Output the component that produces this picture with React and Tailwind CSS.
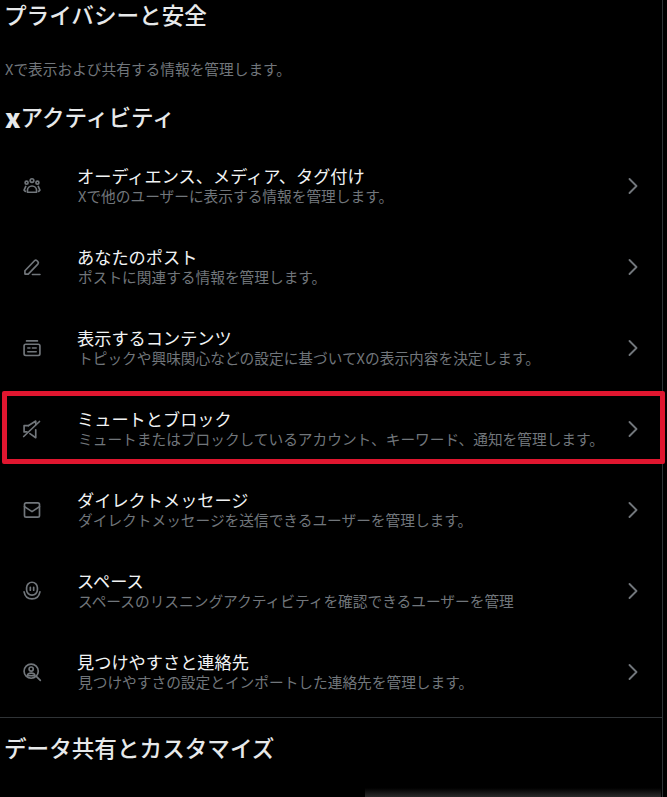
import React from 'react';
import { ChevronRight } from 'lucide-react';

const font = { fontFamily: '"Noto Sans CJK JP", "Noto Sans", sans-serif' };

// icons drawn to match the settings list
const icons = {
  audience: (
    <>
      <circle cx="12" cy="5.500" r="2.200" />
      <circle cx="5.500" cy="8" r="1.800" />
      <circle cx="18.500" cy="8" r="1.800" />
      <path d="M6.500 19.500v-2a5.500 5.500 0 0 1 11 0v2z" />
      <path d="M4.500 12.500 2.500 17l1.500 1.500M19.500 12.500l2 4.500-1.500 1.500" />
    </>
  ),
  pencil: (
    <>
      <path d="M3.500 16.500 15 4.500a2.200 2.200 0 0 1 3 0l1 1a2.200 2.200 0 0 1 0 3L7.500 20.500h-4z" />
      <path d="M12.500 21h9" />
    </>
  ),
  content: (
    <>
      <path d="M5.500 3.500h13" />
      <rect x="2.500" y="7.500" width="19" height="13.500" rx="2" />
      <path d="M7 12h2.500M12.500 12H17M7 16.500h10" />
    </>
  ),
  mute: (
    <>
      <path d="M7.500 8H2.500v7.500h3.500" />
      <path d="m7.500 8 9-5.500V7" />
      <path d="M16.500 13v9.500l-7-5" />
      <path d="M2 21 21 3" />
    </>
  ),
  mail: (
    <>
      <rect x="3" y="3.500" width="18" height="17" rx="2" />
      <path d="m3 8 9 6 9-6" />
    </>
  ),
  spaces: (
    <>
      <rect x="5.500" y="1.500" width="13" height="15.500" rx="6.500" />
      <path d="M10 7.500v3.500M14 7.500v3.500" />
      <path d="M2.500 13c1 5.500 4.800 8.500 9.500 8.500s8.500-3 9.500-8.500" />
    </>
  ),
  discover: (
    <>
      <circle cx="11" cy="11" r="8.500" />
      <circle cx="11" cy="8.500" r="2.500" />
      <path d="M6.500 16.500c0-2.200 1.800-3.200 4.500-3.200s4.500 1 4.500 3.200z" />
      <path d="m17.500 17.500 4.500 4.500" />
    </>
  ),
};

const rows = [
  { icon: 'audience', title: 'オーディエンス、メディア、タグ付け', desc: 'Xで他のユーザーに表示する情報を管理します。' },
  { icon: 'pencil', title: 'あなたのポスト', desc: 'ポストに関連する情報を管理します。' },
  { icon: 'content', title: '表示するコンテンツ', desc: 'トピックや興味関心などの設定に基づいてXの表示内容を決定します。' },
  { icon: 'mute', title: 'ミュートとブロック', desc: 'ミュートまたはブロックしているアカウント、キーワード、通知を管理します。', marked: true },
  { icon: 'mail', title: 'ダイレクトメッセージ', desc: 'ダイレクトメッセージを送信できるユーザーを管理します。' },
  { icon: 'spaces', title: 'スペース', desc: 'スペースのリスニングアクティビティを確認できるユーザーを管理' },
  { icon: 'discover', title: '見つけやすさと連絡先', desc: '見つけやすさの設定とインポートした連絡先を管理します。' },
];

function Row({ icon, title, desc, marked }) {
  return (
    <div className="relative flex h-[81px] items-center pl-[22px] pr-[15px]">
      <svg
        viewBox="0 0 24 24"
        className="h-[20px] w-[20px] shrink-0 text-[#71767b]"
        fill="none"
        stroke="currentColor"
        strokeWidth="2"
        strokeLinecap="round"
        strokeLinejoin="round"
      >
        {icons[icon]}
      </svg>
      <div className="ml-[36px] min-w-0 flex-1">
        <div className="ml-[-1px] h-[20px] text-[17.200px] leading-[20px] whitespace-nowrap text-[#f1f3f4]">{title}</div>
        <div className="h-[20px] text-[14.700px] leading-[20px] whitespace-nowrap text-[#71767b]">{desc}</div>
      </div>
      <ChevronRight className="h-[28px] w-[28px] shrink-0 text-[#71767b]" strokeWidth={1.600} />
      {marked && (
        <div className="absolute top-[3px] left-[2px] z-10 h-[73px] w-[663px] rounded-[2px] border-[5px] border-[#e0162f]" />
      )}
    </div>
  );
}

export default function App() {
  return (
    <div style={font} className="relative h-[797px] w-[667px] overflow-hidden bg-black">
      <div className="w-[662px]">
        <h1 className="pl-[4px] text-[22.600px] leading-[30px] font-medium text-[#e7e9ea]">プライバシーと安全</h1>
        <p className="mt-[29px] pl-[5px] text-[14.700px] leading-[20px] text-[#71767b]">Xで表示および共有する情報を管理します。</p>
        <h2 className="mt-[23px] flex h-[30px] items-center pl-[5px] text-[22.600px] leading-[30px] font-medium text-[#e7e9ea]">
          <span className="text-[26px] leading-[30px] font-black">x</span>アクティビティ
        </h2>
        <div className="mt-[13px]">
          {rows.map((row) => (
            <Row key={row.icon} {...row} />
          ))}
        </div>
        <div className="mt-[5px] h-px bg-[#2f3336]" />
        <h2 className="mt-[15px] pl-[4px] text-[22.600px] leading-[30px] font-medium text-[#e7e9ea]">データ共有とカスタマイズ</h2>
      </div>
      <div className="absolute top-0 right-[4px] h-full w-px bg-[#2f3336]" />
      <div className="absolute right-[6px] bottom-0 h-[9px] w-[296px] bg-gradient-to-t from-[#2a2a2a] to-transparent" />
    </div>
  );
}
